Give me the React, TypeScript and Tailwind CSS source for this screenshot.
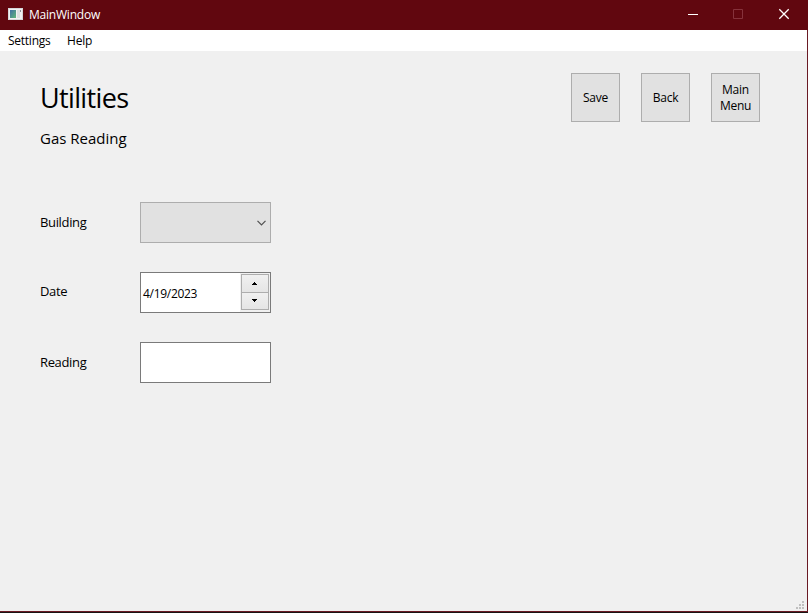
import type { ReactNode } from "react";

function TitleBar() {
  return (
    <header className="flex h-[30px] shrink-0 items-center bg-[#61070f] text-white">
      <svg className="ml-2 shrink-0 -translate-y-px" width="15" height="12" viewBox="0 0 15 12" shapeRendering="crispEdges">
        <defs>
          <linearGradient id="pane" x1="0" y1="0" x2="1" y2="1">
            <stop offset="0" stopColor="#3f6fa5" />
            <stop offset="1" stopColor="#5fb878" />
          </linearGradient>
        </defs>
        <rect width="15" height="12" fill="#d5d7d9" />
        <rect x="1" y="1" width="13" height="10" fill="#f1f2f3" />
        <rect x="2" y="2" width="6" height="8" fill="url(#pane)" />
        <rect x="9" y="2" width="3" height="8" fill="#dcdfe1" />
        <rect x="12" y="2" width="1" height="2" fill="#8b9299" />
      </svg>
      <span className="ml-[6px] text-[12px] leading-4 tracking-[-0.22px]">MainWindow</span>
      <div className="ml-auto flex h-full">
        <svg width="130" height="30" viewBox="0 0 130 30" fill="none">
          <path d="M10 14.5h10" stroke="#fff" />
          <path d="M55.5 9.5h9v9h-9z" stroke="#86323b" />
          <path d="M101.3 9.3l9.4 9.4M110.7 9.3l-9.4 9.4" stroke="#fff" strokeWidth="1.3" />
        </svg>
      </div>
    </header>
  );
}

function PushButton({ children }: { children: ReactNode }) {
  return (
    <button className="flex size-[49px] items-center justify-center border border-[#adadad] bg-[#e1e1e1] text-center text-[12px] leading-4 tracking-[-0.25px]">
      {children}
    </button>
  );
}

function Field({ label, children }: { label: ReactNode; children: ReactNode }) {
  return (
    <div className="flex h-[41px] items-center">
      <div className="w-[100px] pb-[2px] text-[13px] leading-5 tracking-[-0.35px]">{label}</div>
      {children}
    </div>
  );
}

export default function App() {
  return (
    <div className="flex h-[613px] w-[808px] flex-col overflow-hidden bg-[#1a1414] font-['Open_Sans','Noto_Sans',sans-serif] text-black">
      <TitleBar />
      <div className="flex h-[582px] flex-col border-r border-b border-[#6a1a24] bg-[#f0f0f0]">
        <nav className="flex h-[21px] shrink-0 items-center gap-4 bg-white pl-2 text-[12px] leading-4">
          <span className="w-[43px] tracking-[-0.25px]">Settings</span>
          <span className="tracking-[-0.2px]">Help</span>
        </nav>
        <main className="flex grow flex-col pl-10">
          <div className="flex h-[151px] justify-between pr-[47px]">
            <div className="pt-[28px]">
              <h1 className="text-[27px] leading-[38px] tracking-[-0.65px]">Utilities</h1>
              <h2 className="mt-[10px] text-[15px] leading-[22px]">Gas Reading</h2>
            </div>
            <div className="flex gap-[21px] pt-[22px]">
              <PushButton>Save</PushButton>
              <PushButton>Back</PushButton>
              <PushButton>Main<br />Menu</PushButton>
            </div>
          </div>
          <div className="flex flex-col gap-[29px]">
            <Field label="Building">
              <div className="flex h-[41px] w-[131px] items-center justify-end border border-[#adadad] bg-[#e1e1e1] pr-[4px]">
                <svg width="9" height="6" viewBox="0 0 9 6" fill="none">
                  <path d="M0.5 0.8l4 4 4-4" stroke="#505050" strokeWidth="1.2" />
                </svg>
              </div>
            </Field>
            <Field label={<span className="block pb-[2px]">Date</span>}>
              <div className="flex h-[41px] w-[131px] items-center border border-[#7a7a7a] bg-white pl-[2px]">
                <span className="pt-[2px] text-[12px] leading-4 tracking-[-0.3px]">4/19/2023</span>
                <div className="ml-auto flex h-[39px] w-[30px] flex-col bg-[#f0f0f0] px-[1px] pt-[1px] pb-[2px]">
                  <div className="flex h-[19px] items-center justify-center border border-[#adadad] bg-linear-to-b from-[#f0f0f0] to-[#e5e5e5] pr-px">
                    <svg width="5" height="3" viewBox="0 0 5 3" shapeRendering="crispEdges">
                      <path d="M2 0h1v1h1v1h1v1H0V2h1V1h1z" />
                    </svg>
                  </div>
                  <div className="flex h-[18px] items-center justify-center border border-t-0 border-[#adadad] bg-linear-to-b from-[#f0f0f0] to-[#e5e5e5] pr-px">
                    <svg width="5" height="3" viewBox="0 0 5 3" shapeRendering="crispEdges">
                      <path d="M0 0h5v1H4v1H3v1H2V2H1V1H0z" />
                    </svg>
                  </div>
                </div>
              </div>
            </Field>
            <Field label="Reading">
              <div className="h-[41px] w-[131px] border border-[#7a7a7a] bg-white" />
            </Field>
          </div>
          <svg className="mt-auto mr-[3px] mb-[2px] self-end" width="8" height="8" viewBox="0 0 8 8" fill="#bfbfbf" shapeRendering="crispEdges">
            <path d="M6 0h2v2H6zM3 3h2v2H3zM6 3h2v2H6zM0 6h2v2H0zM3 6h2v2H3zM6 6h2v2H6z" />
          </svg>
        </main>
      </div>
    </div>
  );
}
